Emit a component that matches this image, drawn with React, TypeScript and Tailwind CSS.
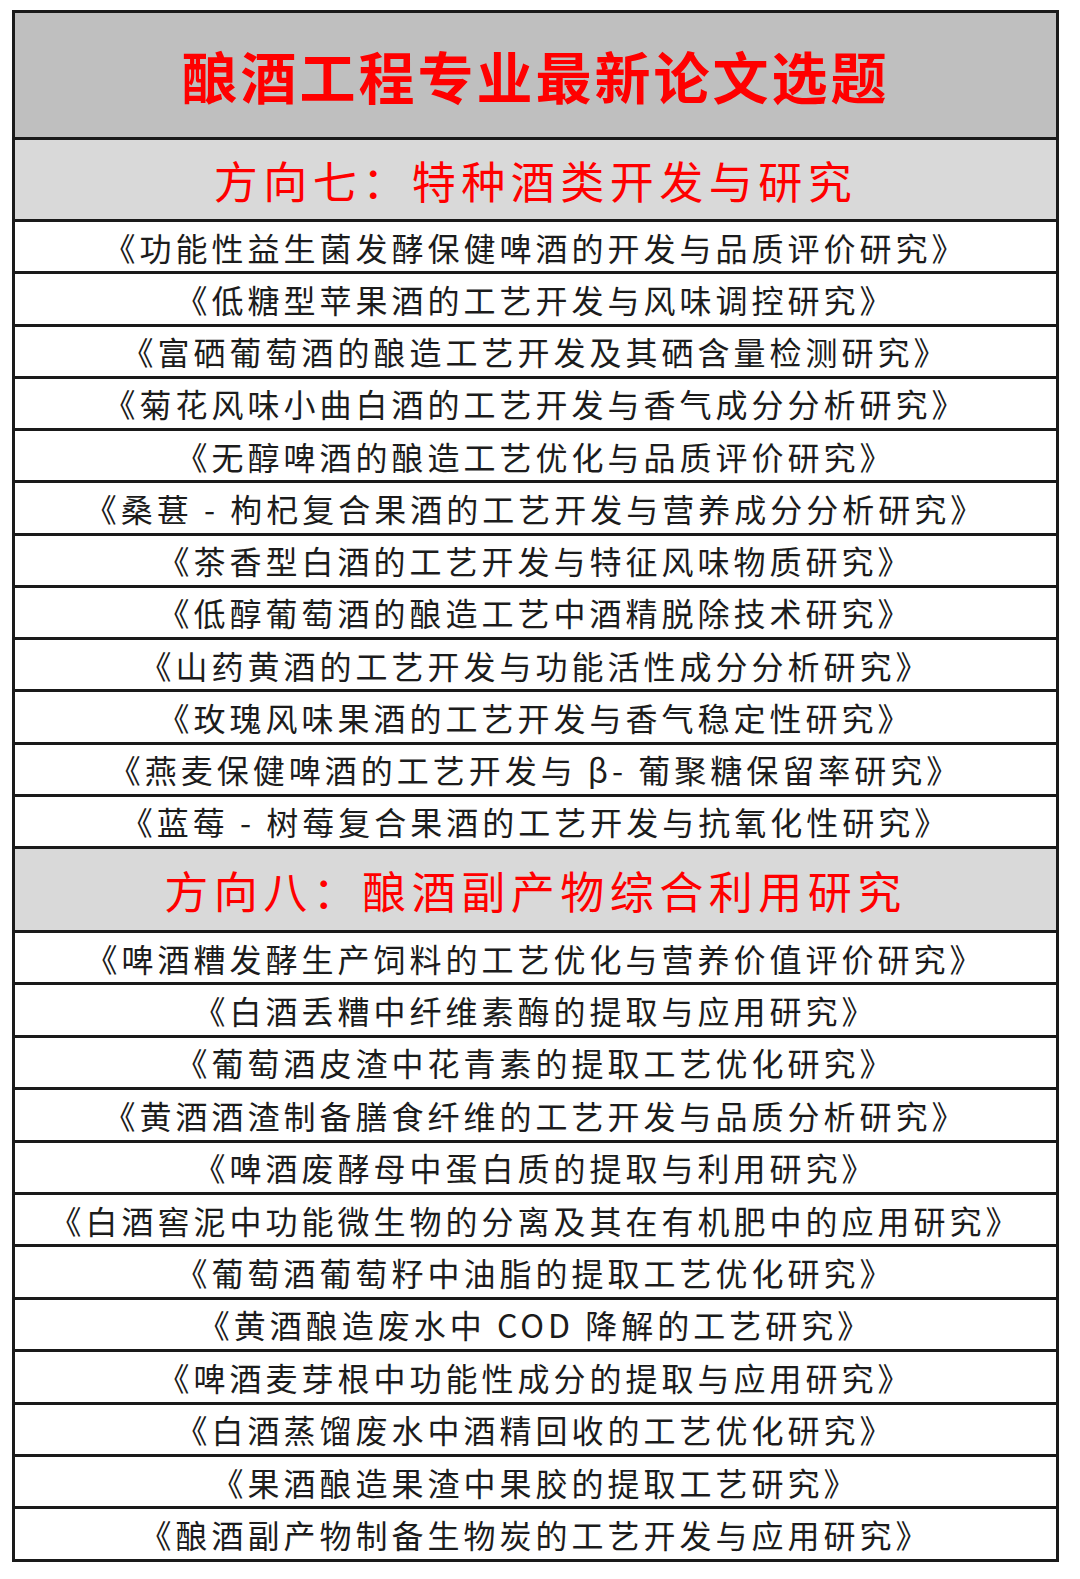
const sections = [
  {
    title: "方向七：特种酒类开发与研究",
    rowH: "h-[52.25px]",
    headH: "h-[82px]",
    items: [
      "《功能性益生菌发酵保健啤酒的开发与品质评价研究》",
      "《低糖型苹果酒的工艺开发与风味调控研究》",
      "《富硒葡萄酒的酿造工艺开发及其硒含量检测研究》",
      "《菊花风味小曲白酒的工艺开发与香气成分分析研究》",
      "《无醇啤酒的酿造工艺优化与品质评价研究》",
      "《桑葚 - 枸杞复合果酒的工艺开发与营养成分分析研究》",
      "《茶香型白酒的工艺开发与特征风味物质研究》",
      "《低醇葡萄酒的酿造工艺中酒精脱除技术研究》",
      "《山药黄酒的工艺开发与功能活性成分分析研究》",
      "《玫瑰风味果酒的工艺开发与香气稳定性研究》",
      "《燕麦保健啤酒的工艺开发与 β- 葡聚糖保留率研究》",
      "《蓝莓 - 树莓复合果酒的工艺开发与抗氧化性研究》",
    ],
  },
  {
    title: "方向八：酿酒副产物综合利用研究",
    rowH: "h-[52.4px]",
    headH: "h-[84px]",
    items: [
      "《啤酒糟发酵生产饲料的工艺优化与营养价值评价研究》",
      "《白酒丢糟中纤维素酶的提取与应用研究》",
      "《葡萄酒皮渣中花青素的提取工艺优化研究》",
      "《黄酒酒渣制备膳食纤维的工艺开发与品质分析研究》",
      "《啤酒废酵母中蛋白质的提取与利用研究》",
      "《白酒窖泥中功能微生物的分离及其在有机肥中的应用研究》",
      "《葡萄酒葡萄籽中油脂的提取工艺优化研究》",
      "《黄酒酿造废水中 COD 降解的工艺研究》",
      "《啤酒麦芽根中功能性成分的提取与应用研究》",
      "《白酒蒸馏废水中酒精回收的工艺优化研究》",
      "《果酒酿造果渣中果胶的提取工艺研究》",
      "《酿酒副产物制备生物炭的工艺开发与应用研究》",
    ],
  },
];

const App = () => {
  return (
    <div
      className="w-[1080px] h-[1579px] bg-white pt-[10px] pl-[12px]"
      style={{ fontFamily: '"Noto Sans CJK SC", "Noto Sans", sans-serif' }}
    >
      <div className="w-[1047px] border-x-[3px] border-t-[3px] border-[#1a1a1a] flex flex-col">
        {/* main title */}
        <div className="h-[127px] bg-[#bfbfbf] border-b-[3px] border-[#1a1a1a] flex items-center justify-center">
          <span className="text-[56px] font-bold text-[#ff0000] tracking-[3px] leading-none">
            酿酒工程专业最新论文选题
          </span>
        </div>

        {sections.map((sec) => (
          <div key={sec.title} className="flex flex-col">
            <div
              className={`${sec.headH} bg-[#d9d9d9] border-b-[3px] border-[#1a1a1a] flex items-center justify-center`}
            >
              <span className="text-[44px] text-[#ff0000] tracking-[5.5px] leading-none">
                {sec.title}
              </span>
            </div>
            {sec.items.map((item) => (
              <div
                key={item}
                className={`${sec.rowH} border-b-[3px] border-[#1a1a1a] flex items-center justify-center`}
              >
                <span className="text-[32px] text-[#1c1c1c] tracking-[4px] leading-none whitespace-nowrap">
                  {item}
                </span>
              </div>
            ))}
          </div>
        ))}
      </div>
    </div>
  );
};

export default App;
